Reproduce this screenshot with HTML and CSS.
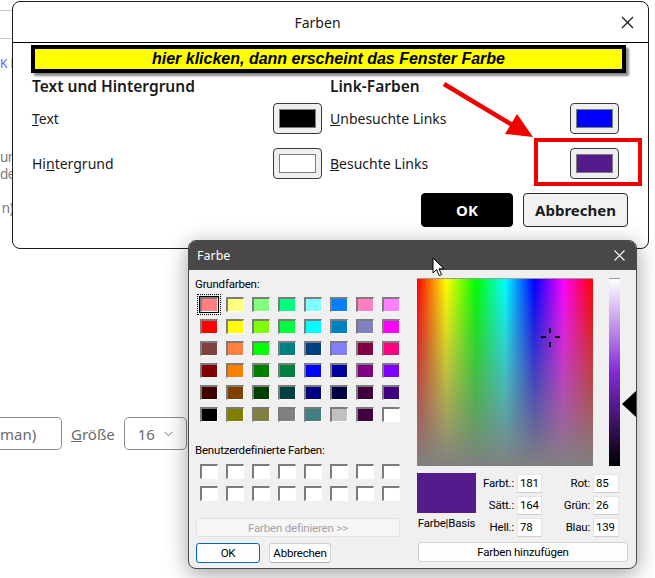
FILE: index.html
```html
<!DOCTYPE html>
<html lang="de">
<head>
<meta charset="utf-8">
<title>Farben</title>
<link rel="stylesheet" href="styles.css">
</head>
<body>
<div class="desk">

  <div class="page">
    <div class="rule"></div>
    <div class="rule rule2"></div>
    <div class="link">K l</div>
    <div class="frag f1">un</div>
    <div class="frag f2">de</div>
    <div class="frag f3">n)</div>
    <div class="formrow">
      <div class="sel sel-font"><span>man)</span><svg class="chev" width="9" height="6" viewBox="0 0 9 6"><path d="M0.5 0.8 L4.5 4.8 L8.5 0.8" stroke="#777" stroke-width="1" fill="none"/></svg></div>
      <span class="lbl"><u>G</u>röße</span>
      <div class="sel sel-size"><span>16</span><svg class="chev" width="9" height="6" viewBox="0 0 9 6"><path d="M0.5 0.8 L4.5 4.8 L8.5 0.8" stroke="#777" stroke-width="1" fill="none"/></svg></div>
    </div>
  </div>

  <div class="main">
    <div class="main-head">
      <span></span>
      <span class="main-title">Farben</span>
      <svg class="main-x" width="13" height="13" viewBox="0 0 13 13"><path d="M1 1 L12 12 M12 1 L1 12" stroke="#1a1a1a" stroke-width="1.3" fill="none"/></svg>
    </div>
    <div class="main-body">
      <div class="banner">hier klicken, dann erscheint das Fenster Farbe</div>
      <div class="cols">
        <div class="col">
          <div class="heading">Text und Hintergrund</div>
          <div class="crow">
            <span><u>T</u>ext</span>
            <div class="cbtn"><span class="sw sw-black"></span></div>
          </div>
          <div class="crow">
            <span>Hi<u>n</u>tergrund</span>
            <div class="cbtn"><span class="sw sw-white"></span></div>
          </div>
        </div>
        <div class="col">
          <div class="heading">Link-Farben</div>
          <div class="crow">
            <span><u>U</u>nbesuchte Links</span>
            <div class="cbtn"><span class="sw sw-blue"></span></div>
          </div>
          <div class="crow">
            <span><u>B</u>esuchte Links</span>
            <div class="cbtn"><span class="sw sw-purple"></span></div>
          </div>
        </div>
      </div>
      <div class="actions">
        <button class="btn-ok">OK</button>
        <button class="btn-cancel">Abbrechen</button>
      </div>
    </div>
  </div>

  <svg class="arrow" width="655" height="250" viewBox="0 0 655 250">
    <line x1="444" y1="84" x2="514" y2="126" stroke="#f20000" stroke-width="4.5"/>
    <polygon points="533,137 505,134 517,114" fill="#f20000"/>
  </svg>
  <div class="redbox"></div>

  <div class="farbe">
    <div class="f-title">
      <span>Farbe</span>
      <svg width="11" height="11" viewBox="0 0 11 11"><path d="M0.5 0.5 L10.5 10.5 M10.5 0.5 L0.5 10.5" stroke="#fff" stroke-width="1.1" fill="none"/></svg>
    </div>
    <div class="f-body">
      <div class="f-left">
        <div class="f-lbl">Grundfarben:</div>
        <div class="grid basic">
          <span class="cell sel-cell" style="background:#ff8080"></span>
          <span class="cell" style="background:#ffff80"></span>
          <span class="cell" style="background:#80ff80"></span>
          <span class="cell" style="background:#00ff80"></span>
          <span class="cell" style="background:#80ffff"></span>
          <span class="cell" style="background:#0080ff"></span>
          <span class="cell" style="background:#ff80c0"></span>
          <span class="cell" style="background:#ff80ff"></span>

          <span class="cell" style="background:#ff0000"></span>
          <span class="cell" style="background:#ffff00"></span>
          <span class="cell" style="background:#80ff00"></span>
          <span class="cell" style="background:#00ff40"></span>
          <span class="cell" style="background:#00ffff"></span>
          <span class="cell" style="background:#0080c0"></span>
          <span class="cell" style="background:#8080c0"></span>
          <span class="cell" style="background:#ff00ff"></span>

          <span class="cell" style="background:#804040"></span>
          <span class="cell" style="background:#ff8040"></span>
          <span class="cell" style="background:#00ff00"></span>
          <span class="cell" style="background:#008080"></span>
          <span class="cell" style="background:#004080"></span>
          <span class="cell" style="background:#8080ff"></span>
          <span class="cell" style="background:#800040"></span>
          <span class="cell" style="background:#ff0080"></span>

          <span class="cell" style="background:#800000"></span>
          <span class="cell" style="background:#ff8000"></span>
          <span class="cell" style="background:#008000"></span>
          <span class="cell" style="background:#008040"></span>
          <span class="cell" style="background:#0000ff"></span>
          <span class="cell" style="background:#0000a0"></span>
          <span class="cell" style="background:#800080"></span>
          <span class="cell" style="background:#8000ff"></span>

          <span class="cell" style="background:#400000"></span>
          <span class="cell" style="background:#804000"></span>
          <span class="cell" style="background:#004000"></span>
          <span class="cell" style="background:#004040"></span>
          <span class="cell" style="background:#000080"></span>
          <span class="cell" style="background:#000040"></span>
          <span class="cell" style="background:#400040"></span>
          <span class="cell" style="background:#400080"></span>

          <span class="cell" style="background:#000000"></span>
          <span class="cell" style="background:#808000"></span>
          <span class="cell" style="background:#808040"></span>
          <span class="cell" style="background:#808080"></span>
          <span class="cell" style="background:#408080"></span>
          <span class="cell" style="background:#c0c0c0"></span>
          <span class="cell" style="background:#400040"></span>
          <span class="cell" style="background:#ffffff"></span>
        </div>
        <div class="f-lbl f-lbl2">Benutzerdefinierte Farben:</div>
        <div class="grid custom">
          <span class="cell"></span><span class="cell"></span><span class="cell"></span><span class="cell"></span>
          <span class="cell"></span><span class="cell"></span><span class="cell"></span><span class="cell"></span>
          <span class="cell"></span><span class="cell"></span><span class="cell"></span><span class="cell"></span>
          <span class="cell"></span><span class="cell"></span><span class="cell"></span><span class="cell"></span>
        </div>
        <div class="define">Farben definieren &gt;&gt;</div>
        <div class="f-actions">
          <button class="f-ok">OK</button>
          <button class="f-cancel">Abbrechen</button>
        </div>
      </div>
      <div class="f-right">
        <div class="spec-row">
          <div class="spectrum">
            <span class="ch ch-t"></span><span class="ch ch-b"></span>
            <span class="ch ch-l"></span><span class="ch ch-r"></span>
          </div>
          <div class="lumbar"></div>
          <div class="lumtri"></div>
        </div>
        <div class="fields-row">
          <div class="preview">
            <div class="pv-sw"></div>
            <div class="pv-lbl">Farbe|Basis</div>
          </div>
          <div class="fields">
            <span class="fl">Farbt.:</span><span class="fi">181</span>
            <span class="fl">Rot:</span><span class="fi">85</span>
            <span class="fl">Sätt.:</span><span class="fi">164</span>
            <span class="fl">Grün:</span><span class="fi">26</span>
            <span class="fl">Hell.:</span><span class="fi">78</span>
            <span class="fl">Blau:</span><span class="fi">139</span>
          </div>
        </div>
        <button class="add">Farben hinzufügen</button>
      </div>
    </div>
  </div>

  <svg class="cursor" width="14" height="21" viewBox="0 0 14 21">
    <path d="M1 1 L1 16 L4.6 12.6 L7.2 18.6 L9.6 17.6 L7 11.8 L12 11.8 Z" fill="#fff" stroke="#000" stroke-width="1" stroke-linejoin="round"/>
  </svg>
</div>
</body>
</html>
```

FILE: styles.css
```css
* { box-sizing: border-box; }
html, body { margin: 0; padding: 0; }
body {
  width: 655px;
  height: 578px;
  overflow: hidden;
  background: #fff;
  font-family: "Noto Sans", "Open Sans", sans-serif;
}
button { font-family: inherit; margin: 0; padding: 0; }
.desk { position: relative; width: 655px; height: 578px; overflow: hidden; }

/* background page */
.page { padding-top: 10px; color: #7a7a7a; font-size: 15px; }
.rule { width: 40px; height: 1px; background: #c8c8c8; }
.rule2 { margin-top: 27px; }
.link { margin-top: 18px; font-size: 12px; line-height: 14px; color: #5c5cff; }
.frag { width: 13px; text-align: right; white-space: nowrap; font-size: 13.5px; line-height: 17px; letter-spacing: -0.6px; }
.f1 { margin-top: 78px; }
.f3 { margin-top: 17px; }
.formrow { margin-top: 200px; display: flex; align-items: center; height: 33px; }
.sel { height: 33px; border: 1px solid #8d8d8d; border-radius: 5px; display: flex; align-items: center; justify-content: flex-end; gap: 9px; padding-right: 14px; color: #6a6a6a; font-size: 15px; }
.sel-font { width: 62px; border-left: 0; border-top-left-radius: 0; border-bottom-left-radius: 0; }
.sel-size { width: 63px; margin-left: 9px; justify-content: center; padding-right: 0; gap: 9px; }
.chev { display: block; }
.lbl { margin-left: 9px; font-size: 15px; color: #6a6a6a; }

/* main dialog */
.main {
  position: absolute;
  left: 12px;
  top: 1px;
  width: 637px;
  height: 248px;
  border: 1px solid #1c1c1c;
  border-radius: 8px;
  background: #fff;
  color: #1a1a1a;
}
.main-head {
  height: 41px;
  border-bottom: 1px solid #000;
  display: grid;
  grid-template-columns: 1fr auto 1fr;
  align-items: center;
  font-size: 14px;
}
.main-title { margin-right: 26px; }
.main-x { justify-self: end; margin-right: 14px; }
.main-body { padding: 2px 20px 0 18px; }
.banner {
  height: 28px;
  margin-right: 2px;
  border: 4px solid #000;
  background: #ffff00;
  box-shadow: 3px 3px 2px rgba(0, 0, 0, 0.45);
  display: flex;
  align-items: center;
  justify-content: center;
  font-family: "Liberation Sans Narrow", "Liberation Sans", sans-serif;
  font-style: italic;
  font-weight: bold;
  font-size: 16px;
  color: #000;
}
.cols {
  display: grid;
  grid-template-columns: 290px 289px;
  column-gap: 8px;
  margin: 3px 0 0 1px;
}
.heading { font-size: 15.5px; font-weight: 600; line-height: 20px; height: 20px; }
.crow {
  height: 31px;
  margin-top: 7px;
  display: flex;
  align-items: center;
  justify-content: space-between;
  font-size: 14px;
}
.crow + .crow { margin-top: 14px; }
.cbtn {
  width: 49px;
  height: 31px;
  border: 1px solid #3a3a3a;
  border-radius: 4px;
  background: #efefef;
  display: flex;
  align-items: center;
  justify-content: center;
}
.sw { width: 37px; height: 19px; border: 1px solid #7d7d7d; }
.sw-black { background: #000; }
.sw-white { background: #fff; }
.sw-blue { background: #0000ff; }
.sw-purple { background: #551a8b; }
.actions { display: flex; justify-content: flex-end; gap: 10px; margin-top: 14px; }
.btn-ok, .btn-cancel {
  height: 34px;
  border-radius: 4px;
  font-size: 15px;
  font-weight: bold;
}
.btn-ok { width: 92px; background: #000; color: #fff; border: 1px solid #000; }
.btn-cancel { width: 105px; background: #f2f2f2; color: #1a1a1a; border: 1px solid #2b2b2b; }

.arrow { position: absolute; left: 0; top: 0; }
.redbox {
  position: absolute;
  left: 534px;
  top: 138px;
  width: 108px;
  height: 48px;
  border: 4px solid #ee0000;
}

/* Farbe dialog */
.farbe {
  position: absolute;
  left: 188px;
  top: 240px;
  width: 449px;
  height: 329px;
  border: 1px solid #4b4b4b;
  border-radius: 8px;
  background: #f0f0f0;
  overflow: hidden;
  box-shadow: 0 5px 22px rgba(0, 0, 0, 0.38);
  color: #000;
  font-family: Roboto, "Noto Sans", sans-serif;
  font-size: 11.5px;
  letter-spacing: -0.2px;
}
.f-title {
  height: 29px;
  background: #4a4846;
  color: #fff;
  display: flex;
  align-items: center;
  justify-content: space-between;
  padding: 0 11px 0 8px;
  font-family: "Noto Sans", sans-serif;
  font-size: 12.5px;
  letter-spacing: 0;
}
.f-body { display: flex; padding: 7px 0 0 6px; }
.f-left { width: 222px; flex-shrink: 0; }
.f-lbl { line-height: 14px; height: 14px; }
.f-lbl2 { margin-top: 21px; }
.grid {
  display: grid;
  grid-template-columns: repeat(8, 18px);
  grid-auto-rows: 15px;
  column-gap: 8px;
  row-gap: 7px;
  margin: 6px 0 0 5px;
}
.cell {
  position: relative;
  background: #fff;
  border-top: 2px solid #7c7c7c;
  border-left: 2px solid #7c7c7c;
  border-right: 1px solid #fdfdfd;
  border-bottom: 1px solid #fdfdfd;
}
.sel-cell { box-shadow: 0 0 0 1px #000; }
.sel-cell::after {
  content: "";
  position: absolute;
  left: -5px;
  top: -5px;
  right: -4px;
  bottom: -4px;
  border: 1px dotted #000;
}
.custom { margin-top: 7px; }
.define {
  width: 204px;
  height: 19px;
  margin: 17px 0 0 1px;
  border: 1px solid #e2e2e2;
  border-radius: 3px;
  background: #f6f6f6;
  color: #a3a3a3;
  display: flex;
  align-items: center;
  justify-content: center;
}
.f-actions { display: flex; gap: 9px; margin: 6px 0 0 1px; }
.f-ok, .f-cancel {
  height: 20px;
  border-radius: 3px;
  background: #fdfdfd;
  font-size: 11.5px;
  letter-spacing: -0.2px;
  color: #000;
}
.f-ok { width: 64px; border: 1px solid #0067c0; }
.f-cancel { width: 62px; border: 1px solid #d0d0d0; border-bottom-color: #b4b4b4; }

.f-right { width: 219px; flex-shrink: 0; }
.spec-row { display: flex; align-items: flex-start; margin-top: 1px; }
.spectrum {
  position: relative;
  flex-shrink: 0;
  width: 176px;
  height: 188px;
  border-top: 1px solid #9a9a9a;
  background:
    linear-gradient(to bottom, rgba(128,128,128,0) 0%, rgba(128,128,128,1) 100%),
    linear-gradient(to right, #ff0000 0%, #ffff00 16.67%, #00ff00 33.33%, #00ffff 50%, #0000ff 66.67%, #ff00ff 83.33%, #ff0000 100%);
}
.ch { position: absolute; background: #000; }
.ch-t { left: 132px; top: 49px; width: 2px; height: 5px; }
.ch-b { left: 132px; top: 63px; width: 2px; height: 5px; }
.ch-l { left: 124px; top: 57px; width: 5px; height: 2px; }
.ch-r { left: 138px; top: 57px; width: 5px; height: 2px; }
.lumbar {
  flex-shrink: 0;
  width: 11px;
  height: 188px;
  margin-left: 16px;
  border-top: 1px solid #9a9a9a;
  background: linear-gradient(to bottom, #ffffff 0%, hsl(271, 68%, 50%) 50%, #000000 100%);
}
.lumtri {
  flex-shrink: 0;
  width: 0;
  height: 0;
  margin: 113px 0 0 2px;
  border-right: 14px solid #000;
  border-top: 13px solid transparent;
  border-bottom: 13px solid transparent;
}
.fields-row { display: flex; margin-top: 7px; }
.preview { width: 59px; flex-shrink: 0; }
.pv-sw { width: 59px; height: 40px; background: #551a8b; }
.pv-lbl { text-align: center; margin-top: 3px; line-height: 14px; white-space: nowrap; }
.fields {
  display: grid;
  grid-template-columns: 38px 25px 45px 26px;
  grid-auto-rows: 19px;
  column-gap: 3px;
  row-gap: 3px;
  margin-top: 1px;
}
.fl { text-align: right; line-height: 19px; }
.fi {
  background: #fff;
  border: 1px solid #e4e4e4;
  border-bottom-color: #cfcfcf;
  line-height: 17px;
  padding-left: 2px;
}
.add {
  display: block;
  width: 210px;
  height: 20px;
  margin: 5px 0 0 1px;
  background: #fdfdfd;
  border: 1px solid #d2d2d2;
  border-radius: 3px;
  font-size: 11.5px;
  letter-spacing: -0.2px;
  color: #000;
}

.cursor { position: absolute; left: 432px; top: 257px; }
```
